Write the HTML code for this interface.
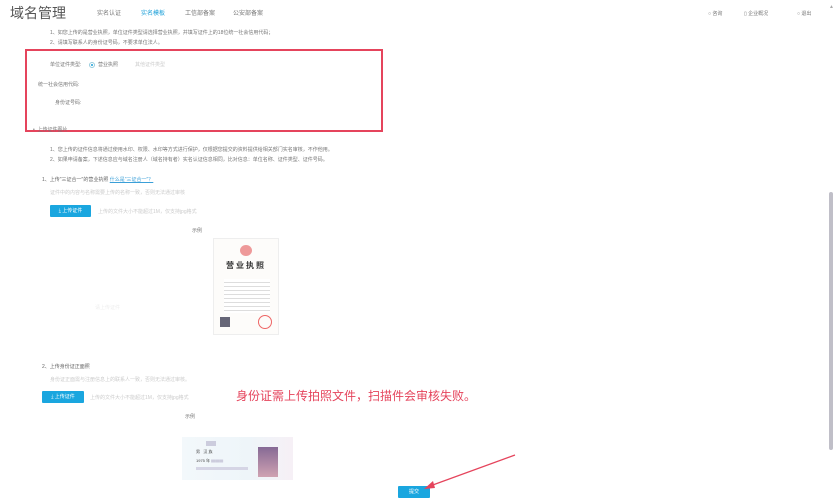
<!DOCTYPE html>
<html><head><meta charset="utf-8"><style>
*{margin:0;padding:0;box-sizing:border-box}
body{width:836px;height:500px;overflow:hidden;background:#fff;font-family:"Liberation Sans","Noto Sans CJK SC",sans-serif;color:#777;position:relative}
.a{position:absolute;white-space:nowrap;font-size:5px;line-height:6px}
.g{color:#ccc}
.btn{position:absolute;background:#1aa6df;color:#fff;font-size:5px;line-height:12px;height:12px;text-align:center;border-radius:1px}
</style></head><body>
<div class="a" style="left:10px;top:4px;font-size:14px;line-height:18px;color:#555">域名管理</div>
<div class="a" style="left:97px;top:11px;font-size:6px">实名认证</div>
<div class="a" style="left:141px;top:11px;font-size:6px;color:#1a9fd8">实名模板</div>
<div class="a" style="left:185px;top:11px;font-size:6px">工信部备案</div>
<div class="a" style="left:233px;top:11px;font-size:6px">公安部备案</div>
<div class="a" style="left:708px;top:11px">○ 咨询</div>
<div class="a" style="left:744px;top:11px">▯ 企业概况</div>
<div class="a" style="left:797px;top:11px">○ 退出</div>
<div class="a" style="left:829px;top:4px;color:#aaa;font-size:5px">▲</div>
<div class="a" style="left:50px;top:30px">1、如您上传的是营业执照，单位证件类型请选择营业执照，并填写证件上的18位统一社会信用代码；</div>
<div class="a" style="left:50px;top:40px">2、请填写联系人的身份证号码，不要求单位法人。</div>
<div style="position:absolute;left:25px;top:49px;width:358px;height:83px;border:2px solid #e5445c"></div>
<div class="a" style="left:50px;top:62px">单位证件类型:</div>
<div style="position:absolute;left:89px;top:62px;width:6px;height:6px;border:1px solid #9cd;border-radius:50%"><div style="margin:1px;width:2px;height:2px;background:#1a9fd8;border-radius:50%"></div></div>
<div class="a" style="left:98px;top:62px">营业执照</div>
<div class="a g" style="left:135px;top:62px">其他证件类型</div>
<div class="a" style="left:38px;top:82px">统一社会信用代码:</div>
<div class="a" style="left:55px;top:100px">身份证号码:</div>
<div class="a" style="left:33px;top:127px">•&nbsp; 上传证件图片</div>
<div class="a" style="left:50px;top:147px">1、您上传的证件信息将通过使用水印、权限、水印等方式进行保护，仅根据您提交的资料提供给相关部门实名审核，不作他用。</div>
<div class="a" style="left:50px;top:157px">2、如果申请备案，下述信息应与域名注册人（域名持有者）实名认证信息相同，比对信息：单位名称、证件类型、证件号码。</div>
<div class="a" style="left:42px;top:177px;color:#666">1、上传"三证合一"的营业执照 <span style="color:#3a9fd8;text-decoration:underline">什么是"三证合一"？</span></div>
<div class="a g" style="left:50px;top:190px">证件中的内容与名称需要上传的名称一致，否则无法通过审核</div>
<div class="btn" style="left:50px;top:205px;width:41px">⤓ 上传证件</div>
<div class="a g" style="left:98px;top:209px">上传的文件大小不能超过1M，仅支持jpg格式</div>
<div class="a" style="left:192px;top:228px">示例</div>
<div style="position:absolute;left:213px;top:238px;width:66px;height:97px;border:1px solid #eee;background:#fdfcfa">
<div style="position:absolute;left:26px;top:6px;width:12px;height:11px;background:#e99;border-radius:50%"></div>
<div style="position:absolute;left:12px;top:21px;font-size:8px;font-weight:bold;color:#333;letter-spacing:2px;white-space:nowrap">营业执照</div>
<div style="position:absolute;left:10px;top:40px;width:46px;height:34px;background:repeating-linear-gradient(#fff 0 3px,#ddd 3px 4px)"></div>
<div style="position:absolute;left:6px;top:78px;width:10px;height:10px;background:#667"></div>
<div style="position:absolute;left:44px;top:76px;width:14px;height:14px;border:1px solid #e66;border-radius:50%"></div>
</div>
<div class="a" style="left:95px;top:305px;color:#eee">请上传证件</div>
<div class="a" style="left:42px;top:364px;color:#666">2、上传身份证正面照</div>
<div class="a g" style="left:50px;top:377px">身份证正面需与注册信息上的联系人一致，否则无法通过审核。</div>
<div class="btn" style="left:42px;top:391px;width:42px">⤓ 上传证件</div>
<div class="a g" style="left:90px;top:395px">上传的文件大小不能超过1M，仅支持jpg格式</div>
<div class="a" style="left:236px;top:389px;font-size:12px;line-height:15px;color:#e5445c">身份证需上传拍照文件，扫描件会审核失败。</div>
<div class="a" style="left:185px;top:414px">示例</div>
<div style="position:absolute;left:182px;top:437px;width:111px;height:43px;background:linear-gradient(90deg,#f3f8fb,#eef5f9 60%,#f6f0f6)">
<div style="position:absolute;left:24px;top:4px;width:10px;height:5px;background:#ccd"></div>
<div style="position:absolute;left:14px;top:12px;font-size:4px;color:#444;white-space:nowrap">男 &nbsp; 汉 族</div>
<div style="position:absolute;left:14px;top:21px;font-size:4px;color:#444;white-space:nowrap">1975 年 <span style="color:#ccd">▆▆▆</span></div>
<div style="position:absolute;left:14px;top:30px;width:52px;height:3px;background:#d5d5e5"></div>
<div style="position:absolute;left:76px;top:10px;width:20px;height:30px;background:linear-gradient(#7a5a8a,#c9a);opacity:.9"></div>
</div>
<div class="btn" style="left:398px;top:486px;width:32px">提交</div>
<svg style="position:absolute;left:0;top:0" width="836" height="500"><line x1="515" y1="455" x2="430" y2="486" stroke="#e5445c" stroke-width="1.2"/><polygon points="424,489 433,481 435,488" fill="#e5445c"/></svg>
<div style="position:absolute;left:829px;top:192px;width:4px;height:258px;background:#c0bfc8;border-radius:2px"></div>
</body></html>
